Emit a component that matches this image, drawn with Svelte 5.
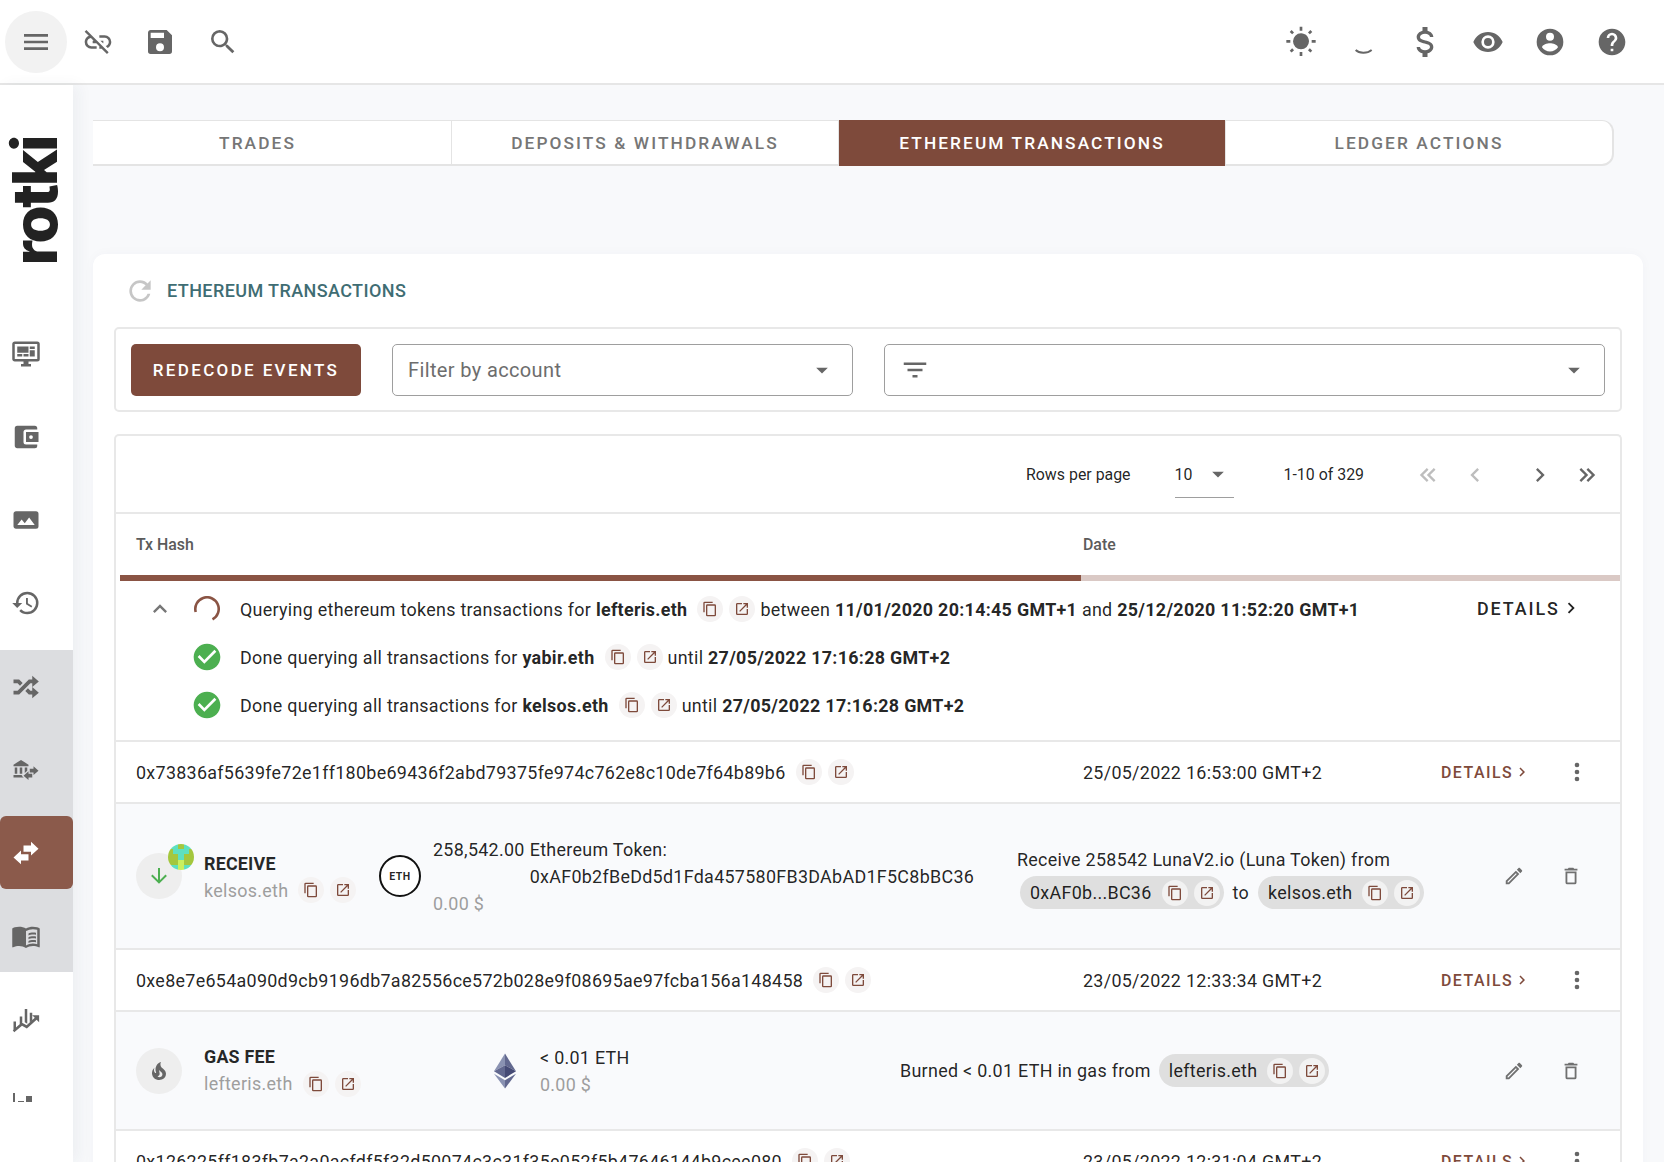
<script>
  const p = {
    menu: 'M3,6H21V8H3V6M3,11H21V13H3V11M3,16H21V18H3V16Z',
    linkoff: 'M17,7H13V8.9H17C18.71,8.9 20.1,10.29 20.1,12C20.1,13.43 19.12,14.63 17.79,15L19.25,16.44C20.88,15.61 22,13.95 22,12A5,5 0 0,0 17,7M16,11H13.81L15.81,13H16V11M2,4.27L5.11,7.38C3.29,8.12 2,9.91 2,12A5,5 0 0,0 7,17H11V15.1H7C5.29,15.1 3.9,13.71 3.9,12C3.9,10.41 5.11,9.1 6.66,8.93L8.73,11H8V13H10.73L13,15.27V17H14.73L18.74,21L20,19.74L3.27,3L2,4.27Z',
    save: 'M15,9H5V5H15M12,19A3,3 0 0,1 9,16A3,3 0 0,1 12,13A3,3 0 0,1 15,16A3,3 0 0,1 12,19M17,3H5C3.89,3 3,3.9 3,5V19A2,2 0 0,0 5,21H19A2,2 0 0,0 21,19V7L17,3Z',
    search: 'M9.5,3A6.5,6.5 0 0,1 16,9.5C16,11.11 15.41,12.59 14.44,13.73L14.71,14H15.5L20.5,19L19,20.5L14,15.5V14.71L13.73,14.44C12.59,15.41 11.11,16 9.5,16A6.5,6.5 0 0,1 3,9.5A6.5,6.5 0 0,1 9.5,3M9.5,5C7,5 5,7 5,9.5C5,12 7,14 9.5,14C12,14 14,12 14,9.5C14,7 12,5 9.5,5Z',
    sun: 'M3.55,18.54L4.96,19.95L6.76,18.16L5.34,16.74M11,22.45C11.32,22.45 13,22.45 13,22.45V19.5H11M12,5.5A6,6 0 0,0 6,11.5A6,6 0 0,0 12,17.5A6,6 0 0,0 18,11.5C18,8.18 15.31,5.5 12,5.5M20,12.5H23V10.5H20M17.24,18.16L19.04,19.95L20.45,18.54L18.66,16.74M20.45,4.46L19.04,3.05L17.24,4.84L18.66,6.26M13,0.55H11V3.5H13M4,10.5H1V12.5H4M6.76,4.84L4.96,3.05L3.55,4.46L5.34,6.26L6.76,4.84Z',
    usd: 'M7,15H9C9,16.08 10.37,17 12,17C13.63,17 15,16.08 15,15C15,13.9 13.96,13.5 11.76,12.97C9.64,12.44 7,11.78 7,9C7,7.21 8.47,5.69 10.5,5.18V3H13.5V5.18C15.53,5.69 17,7.21 17,9H15C15,7.92 13.63,7 12,7C10.37,7 9,7.92 9,9C9,10.1 10.04,10.5 12.24,11.03C14.36,11.56 17,12.22 17,15C17,16.79 15.53,18.31 13.5,18.82V21H10.5V18.82C8.47,18.31 7,16.79 7,15Z',
    eye: 'M12,9A3,3 0 0,0 9,12A3,3 0 0,0 12,15A3,3 0 0,0 15,12A3,3 0 0,0 12,9M12,17A5,5 0 0,1 7,12A5,5 0 0,1 12,7A5,5 0 0,1 17,12A5,5 0 0,1 12,17M12,4.5C7,4.5 2.73,7.61 1,12C2.73,16.39 7,19.5 12,19.5C17,19.5 21.27,16.39 23,12C21.27,7.61 17,4.5 12,4.5Z',
    account: 'M12,19.2C9.5,19.2 7.29,17.92 6,16C6.03,14 10,12.9 12,12.9C14,12.9 17.97,14 18,16C16.71,17.92 14.5,19.2 12,19.2M12,5A3,3 0 0,1 15,8A3,3 0 0,1 12,11A3,3 0 0,1 9,8A3,3 0 0,1 12,5M12,2A10,10 0 0,0 2,12A10,10 0 0,0 12,22A10,10 0 0,0 22,12A10,10 0 0,0 12,2Z',
    help: 'M15.07,11.25L14.17,12.17C13.45,12.89 13,13.5 13,15H11V14.5C11,13.39 11.45,12.39 12.17,11.67L13.41,10.41C13.78,10.05 14,9.55 14,9C14,7.89 13.1,7 12,7A2,2 0 0,0 10,9H8A4,4 0 0,1 12,5A4,4 0 0,1 16,9C16,9.88 15.64,10.67 15.07,11.25M13,19H11V17H13M12,2A10,10 0 0,0 2,12C2,17.53 6.47,22 12,22C17.53,22 22,17.53 22,12C22,6.47 17.53,2 12,2Z',
    refresh: 'M17.65,6.35C16.2,4.9 14.21,4 12,4A8,8 0 0,0 4,12A8,8 0 0,0 12,20C15.73,20 18.84,17.45 19.73,14H17.65C16.83,16.33 14.61,18 12,18A6,6 0 0,1 6,12A6,6 0 0,1 12,6C13.66,6 15.14,6.69 16.22,7.78L13,11H20V4L17.65,6.35Z',
    filter: 'M6,13H18V11H6M3,6V8H21V6M10,18H14V16H10V18Z',
    down: 'M7,10L12,15L17,10H7Z',
    left: 'M15.41,16.58L10.83,12L15.41,7.41L14,6L8,12L14,18L15.41,16.58Z',
    right: 'M8.59,16.58L13.17,12L8.59,7.41L10,6L16,12L10,18L8.59,16.58Z',
    dleft: 'M18.41,7.41L17,6L11,12L17,18L18.41,16.59L13.83,12L18.41,7.41M12.41,7.41L11,6L5,12L11,18L12.41,16.59L7.83,12L12.41,7.41Z',
    dright: 'M5.59,7.41L7,6L13,12L7,18L5.59,16.59L10.17,12L5.59,7.41M11.59,7.41L13,6L19,12L13,18L11.59,16.59L16.17,12L11.59,7.41Z',
    up: 'M7.41,15.41L12,10.83L16.59,15.41L18,14L12,8L6,14L7.41,15.41Z',
    check: 'M12 2C6.5 2 2 6.5 2 12S6.5 22 12 22 22 17.5 22 12 17.5 2 12 2M10 17L5 12L6.41 10.59L10 14.17L17.59 6.58L19 8L10 17Z',
    copy: 'M19,21H8V7H19M19,5H8A2,2 0 0,0 6,7V21A2,2 0 0,0 8,23H19A2,2 0 0,0 21,21V7A2,2 0 0,0 19,5M16,1H4A2,2 0 0,0 2,3V17H4V3H16V1Z',
    open: 'M14,3V5H17.59L7.76,14.83L9.17,16.24L19,6.41V10H21V3M19,19H5V5H12V3H5C3.89,3 3,3.9 3,5V19A2,2 0 0,0 5,21H19A2,2 0 0,0 21,19V12H19V19Z',
    arrow: 'M11,4H13V16L18.5,10.5L19.92,11.92L12,19.84L4.08,11.92L5.5,10.5L11,16V4Z',
    fire: 'M17.66 11.2C17.43 10.9 17.15 10.64 16.89 10.38C16.22 9.78 15.46 9.35 14.82 8.72C13.33 7.26 13 4.85 13.95 3C13 3.23 12.17 3.75 11.46 4.32C8.87 6.4 7.85 10.07 9.07 13.22C9.11 13.32 9.15 13.42 9.15 13.55C9.15 13.77 9 13.97 8.8 14.05C8.57 14.15 8.33 14.09 8.14 13.93C8.08 13.88 8.04 13.83 8 13.76C6.87 12.33 6.69 10.28 7.45 8.64C5.78 10 4.87 12.3 5 14.47C5.06 14.97 5.12 15.47 5.29 15.97C5.43 16.57 5.7 17.17 6 17.7C7.08 19.43 8.95 20.67 10.96 20.92C13.1 21.19 15.39 20.8 17.03 19.32C18.86 17.66 19.5 15 18.56 12.72L18.43 12.46C18.28 12.13 17.66 11.2 17.66 11.2M14.5 17.5C14.22 17.74 13.76 18 13.4 18.1C12.28 18.5 11.16 17.94 10.5 17.28C11.69 17 12.4 16.12 12.61 15.23C12.78 14.43 12.46 13.77 12.33 13C12.21 12.26 12.23 11.63 12.5 10.94C12.69 11.32 12.89 11.7 13.13 12C13.9 13 15.11 13.44 15.37 14.8C15.41 14.94 15.43 15.08 15.43 15.23C15.46 16.05 15.1 16.95 14.5 17.5H14.5Z',
    pencil: 'M14.06,9L15,9.94L5.92,19H5V18.08L14.06,9M17.66,3C17.41,3 17.15,3.1 16.96,3.29L15.13,5.12L18.88,8.87L20.71,7.04C21.1,6.65 21.1,6 20.71,5.63L18.37,3.29C18.17,3.09 17.92,3 17.66,3M14.06,6.19L3,17.25V21H6.75L17.81,9.94L14.06,6.19Z',
    trash: 'M6,19A2,2 0 0,0 8,21H16A2,2 0 0,0 18,19V7H6V19M8,9H16V19H8V9M15.5,4L14.5,3H9.5L8.5,4H5V6H19V4H15.5Z',
    dots: 'M12,16A2,2 0 0,1 14,18A2,2 0 0,1 12,20A2,2 0 0,1 10,18A2,2 0 0,1 12,16M12,10A2,2 0 0,1 14,12A2,2 0 0,1 12,14A2,2 0 0,1 10,12A2,2 0 0,1 12,10M12,4A2,2 0 0,1 14,6A2,2 0 0,1 12,8A2,2 0 0,1 10,6A2,2 0 0,1 12,4Z',
    dash: 'M21,16V4H3V16H21M21,2A2,2 0 0,1 23,4V16A2,2 0 0,1 21,18H14V20H16V22H8V20H10V18H3C1.89,18 1,17.1 1,16V4C1,2.89 1.89,2 3,2H21M5,6H14V11H5V6M15,6H19V8H15V6M19,9V14H15V9H19M5,12H9V14H5V12M10,12H14V14H10V12Z',
    wallet: 'M21,18V19A2,2 0 0,1 19,21H5C3.89,21 3,20.1 3,19V5A2,2 0 0,1 5,3H19A2,2 0 0,1 21,5V6H12C10.89,6 10,6.9 10,8V16A2,2 0 0,0 12,18M12,16H22V8H12M16,13.5A1.5,1.5 0 0,1 14.5,12A1.5,1.5 0 0,1 16,10.5A1.5,1.5 0 0,1 17.5,12A1.5,1.5 0 0,1 16,13.5Z',
    image: 'M20,5A2,2 0 0,1 22,7V17A2,2 0 0,1 20,19H4C2.89,19 2,18.1 2,17V7C2,5.89 2.89,5 4,5H20M5,16H19L14.5,10L11,14.5L8.5,11.5L5,16Z',
    history: 'M13.5,8H12V13L16.28,15.54L17,14.33L13.5,12.25V8M13,3A9,9 0 0,0 4,12H1L4.96,16.03L9,12H6A7,7 0 0,1 13,5A7,7 0 0,1 20,12A7,7 0 0,1 13,19C11.07,19 9.32,18.21 8.06,16.94L6.64,18.36C8.27,20 10.5,21 13,21A9,9 0 0,0 22,12A9,9 0 0,0 13,3',
    shuffle: 'M17,3L22.25,7.5L17,12L22.25,16.5L17,21V18H14.26L11.44,15.18L13.56,13.06L15.5,15H17V12L17,9H15.5L6.5,18H2V15H5.26L14.26,6H17V3M2,6H6.5L9.32,8.82L7.2,10.94L5.26,9H2V6Z',
    bank: 'M15,14V11H18V9L22,12.5L18,16V14H15M14,7.7V9H2V7.7L8,4L14,7.7M7,10H9V15H7V10M3,10H5V15H3V10M13,10V12.5L11,14.3V10H13M9.1,16L8.5,16.5L10.2,18H2V16H9.1M17,15V18H14V20L10,16.5L14,13V15H17Z',
    swap: 'M8,10V13H14V18H8V21L2,15.5L8,10M22,8.5L16,3V6H10V11H16V14L22,8.5Z',
    book: 'M12,21.5C10.65,20.65 8.2,20 6.5,20C4.85,20 3.15,20.3 1.75,21.05C1.65,21.1 1.6,21.1 1.5,21.1C1.25,21.1 1,20.85 1,20.6V6C1.6,5.55 2.25,5.25 3,5C4.11,4.65 5.33,4.5 6.5,4.5C8.45,4.5 10.55,4.9 12,6C13.45,4.9 15.55,4.5 17.5,4.5C18.67,4.5 19.89,4.65 21,5C21.75,5.25 22.4,5.55 23,6V20.6C23,20.85 22.75,21.1 22.5,21.1C22.4,21.1 22.35,21.1 22.25,21.05C20.85,20.3 19.15,20 17.5,20C15.8,20 13.35,20.65 12,21.5M12,8V19.5C13.35,18.65 15.8,18 17.5,18C18.7,18 19.9,18.15 21,18.5V7C19.9,6.65 18.7,6.5 17.5,6.5C15.8,6.5 13.35,7.15 12,8M14,10C15.2,9.3 17.6,9 20,9.4V10.9C17.6,10.5 15.2,10.8 14,11.5V10M14,13C15.2,12.3 17.6,12 20,12.4V13.9C17.6,13.5 15.2,13.8 14,14.5V13M14,16C15.2,15.3 17.6,15 20,15.4V16.9C17.6,16.5 15.2,16.8 14,17.5V16Z',
    finance: 'M2,21L2,14H4V18.8L2,21M7,17V10H9V15L7,17M11,14.6V4H13V15.7L11,14.6M15,14.5V7H17V12.7L15,14.5M2.6,22.6L1.4,21L8.5,14.7L12.5,16.9L19,11L17,9H22.5V14.5L20.5,12.5L12.7,19.5L8.8,17.3L2.6,22.6Z'
  };
  const t = '5ee0c0', o = 'a4c73e', y = 'c8f060';
  const blockie = [
    t, t, o, t, t,
    o, t, t, t, o,
    o, o, t, o, o,
    o, o, y, o, o,
    t, t, y, t, t
  ];
</script>

{#snippet icon(d, cls = '')}
  <svg viewBox="0 0 24 24" class={cls} aria-hidden="true"><path {d} /></svg>
{/snippet}

{#snippet acts()}
  <span class="acts">
    <span class="ab">{@render icon(p.copy)}</span>
    <span class="ab">{@render icon(p.open)}</span>
  </span>
{/snippet}

{#snippet txrow(hash, date)}
  <div class="tx">
    <div class="hash"><span>{hash}</span>{@render acts()}</div>
    <div class="date">{date}</div>
    <div class="txdetails">DETAILS {@render icon(p.right)}</div>
    <div class="dots">{@render icon(p.dots)}</div>
  </div>
{/snippet}

<div class="app">
  <header class="topbar">
    <div class="tgroup">
      <span class="tb round">{@render icon(p.menu)}</span>
      <span class="tb">{@render icon(p.linkoff)}</span>
      <span class="tb">{@render icon(p.save)}</span>
      <span class="tb">{@render icon(p.search)}</span>
    </div>
    <div class="tgroup right">
      <span class="tb">{@render icon(p.sun)}</span>
      <span class="tb">
        <svg viewBox="0 0 24 24" aria-hidden="true"><path class="moon" d="M6.5 18 C9 20.6 15 21 18.5 18" /></svg>
      </span>
      <span class="tb">{@render icon(p.usd, 'big')}</span>
      <span class="tb">{@render icon(p.eye)}</span>
      <span class="tb">{@render icon(p.account)}</span>
      <span class="tb">{@render icon(p.help)}</span>
    </div>
  </header>

  <div class="layout">
    <aside class="side">
      <div class="logo"><span>rotki</span></div>
      <div class="nav">{@render icon(p.dash)}</div>
      <div class="nav">{@render icon(p.wallet)}</div>
      <div class="nav">{@render icon(p.image)}</div>
      <div class="nav">{@render icon(p.history)}</div>
      <div class="navgroup">
        <div class="nav">{@render icon(p.shuffle)}</div>
        <div class="nav">{@render icon(p.bank)}</div>
        <div class="nav active">{@render icon(p.swap)}</div>
        <div class="nav">{@render icon(p.book)}</div>
      </div>
      <div class="nav">{@render icon(p.finance)}</div>
      <div class="nav clipbars"><i class="b1"></i><i class="b2"></i><i class="b3"></i></div>
    </aside>

    <main class="main">
      <nav class="tabs">
        <div class="tab first">TRADES</div>
        <div class="tab">DEPOSITS &amp; WITHDRAWALS</div>
        <div class="tab on">ETHEREUM TRANSACTIONS</div>
        <div class="tab">LEDGER ACTIONS</div>
      </nav>

      <section class="card">
        <div class="title">
          {@render icon(p.refresh)}
          <span>ETHEREUM TRANSACTIONS</span>
        </div>

        <div class="filters">
          <div class="btn">REDECODE EVENTS</div>
          <div class="field acc"><span>Filter by account</span>{@render icon(p.down)}</div>
          <div class="field flt">{@render icon(p.filter, 'ficon')}{@render icon(p.down)}</div>
        </div>

        <div class="table">
          <div class="pager">
            <span>Rows per page</span>
            <span class="rows"><span>10</span>{@render icon(p.down)}</span>
            <span class="range">1-10 of 329</span>
            <span class="pg">
              {@render icon(p.dleft, 'off')}
              {@render icon(p.left, 'off gapr')}
              {@render icon(p.right)}
              {@render icon(p.dright)}
            </span>
          </div>

          <div class="thead">
            <div class="th1">Tx Hash</div>
            <div>Date</div>
          </div>
          <div class="progress"><div class="bar"></div></div>

          <div class="queries">
            <div class="q">
              <span class="caret">{@render icon(p.up)}</span>
              <svg class="spin" viewBox="0 0 26 26" aria-hidden="true"><path d="M1.7 16 A11.7 11.7 0 1 1 18.5 23.3" /></svg>
              <span class="qt">Querying ethereum tokens transactions for <b>lefteris.eth</b></span>
              {@render acts()}
              <span class="qt">between <b>11/01/2020 20:14:45 GMT+1</b> and <b>25/12/2020 11:52:20 GMT+1</b></span>
              <span class="qdetails">DETAILS {@render icon(p.right)}</span>
            </div>
            <div class="q">
              <span class="caret"></span>
              {@render icon(p.check, 'ok')}
              <span class="qt">Done querying all transactions for <b>yabir.eth</b></span>
              {@render acts()}
              <span class="qt">until <b>27/05/2022 17:16:28 GMT+2</b></span>
            </div>
            <div class="q">
              <span class="caret"></span>
              {@render icon(p.check, 'ok')}
              <span class="qt">Done querying all transactions for <b>kelsos.eth</b></span>
              {@render acts()}
              <span class="qt">until <b>27/05/2022 17:16:28 GMT+2</b></span>
            </div>
          </div>

          {@render txrow('0x73836af5639fe72e1ff180be69436f2abd79375fe974c762e8c10de7f64b89b6', '25/05/2022 16:53:00 GMT+2')}

          <div class="ev receive">
            <div class="evicon">
              {@render icon(p.arrow, 'green')}
              <span class="blockie">
                {#each blockie as c}<i style="background:#{c}"></i>{/each}
              </span>
            </div>
            <div class="evtype">
              <b>RECEIVE</b>
              <div class="who">kelsos.eth{@render acts()}</div>
            </div>
            <div class="asset">
              <div class="ethc">ETH</div>
              <div class="amt">
                <div class="a1"><span>258,542.00</span><span class="tok">Ethereum Token:<br />0xAF0b2fBeDd5d1Fda457580FB3DAbAD1F5C8bBC36</span></div>
                <div class="usd">0.00 $</div>
              </div>
            </div>
            <div class="notes">
              <div>Receive 258542 LunaV2.io (Luna Token) from</div>
              <div class="chips">
                <span class="chip">0xAF0b...BC36{@render acts()}</span>
                <span>to</span>
                <span class="chip">kelsos.eth{@render acts()}</span>
              </div>
            </div>
            <div class="evacts">{@render icon(p.pencil)}{@render icon(p.trash)}</div>
          </div>

          {@render txrow('0xe8e7e654a090d9cb9196db7a82556ce572b028e9f08695ae97fcba156a148458', '23/05/2022 12:33:34 GMT+2')}

          <div class="ev gas">
            <div class="evicon">{@render icon(p.fire, 'flame')}</div>
            <div class="evtype">
              <b>GAS FEE</b>
              <div class="who">lefteris.eth{@render acts()}</div>
            </div>
            <div class="asset">
              <svg class="ethlogo" viewBox="0 0 24 38" aria-hidden="true">
                <path fill="#8a92b2" d="M12 0 L0 19.4 L12 12.6Z" />
                <path fill="#62688f" d="M12 0 L24 19.4 L12 12.6Z" />
                <path fill="#62688f" d="M0 19.4 L12 12.6 L12 26.5Z" />
                <path fill="#454a75" d="M24 19.4 L12 12.6 L12 26.5Z" />
                <path fill="#8a92b2" d="M0 22 L12 38 L12 29Z" />
                <path fill="#62688f" d="M24 22 L12 38 L12 29Z" />
              </svg>
              <div class="amt2">
                <div>&lt; 0.01 ETH</div>
                <div class="usd">0.00 $</div>
              </div>
            </div>
            <div class="notes line">
              <span>Burned &lt; 0.01 ETH in gas from</span>
              <span class="chip">lefteris.eth{@render acts()}</span>
            </div>
            <div class="evacts">{@render icon(p.pencil)}{@render icon(p.trash)}</div>
          </div>

          {@render txrow('0x126225ff183fb7a2a0acfdf5f32d50074c3c31f35e052f5b47646144b9cee080', '23/05/2022 12:31:04 GMT+2')}
        </div>
      </section>
    </main>
  </div>
</div>

<style>
  :global(body) { margin: 0; background: #f8f9fb; }
  .app {
    width: 1664px; height: 1162px; overflow: hidden;
    font-family: Roboto, "Liberation Sans", sans-serif;
    color: rgba(0,0,0,.87);
    font-size: 16px;
    background: #f8f9fb;
  }
  svg { display: block; width: 24px; height: 24px; fill: currentColor; flex: none; }

  .topbar {
    height: 83px; box-sizing: content-box;
    background: #fff; border-bottom: 2px solid #e6e6e6;
    display: flex; justify-content: space-between; align-items: center;
    padding: 0 21px 0 5px; color: #666;
  }
  .tgroup { display: flex; align-items: center; }
  .tb { width: 62.2px; height: 62px; display: flex; align-items: center; justify-content: center; }
  .tb svg { width: 32px; height: 32px; }
  .tb svg.big { width: 40px; height: 40px; }
  .round { background: #f2f2f2; border-radius: 50%; }
  .moon { fill: none; stroke: #666; stroke-width: 1.4; }

  .layout { display: flex; height: 1077px; }
  .side { width: 73px; background: #fff; flex: none; overflow: hidden; box-shadow: 6px 0 14px rgba(30,50,80,.05); }
  .logo { height: 232px; display: flex; justify-content: center; align-items: flex-start; }
  .logo span {
    writing-mode: vertical-rl; transform: translateX(-2px) rotate(180deg);
    font-family: Inter, sans-serif; font-weight: 800; font-size: 62px; line-height: 60px;
    letter-spacing: -2.5px; color: #222; margin-top: 52px;
  }
  .nav { height: 73px; margin-bottom: 10px; display: flex; align-items: center; padding-left: 11px; box-sizing: border-box; color: #666; }
  .nav svg { width: 30px; height: 30px; }
  .navgroup { background: #dcdde0; margin: 11px 0 10px; }
  .navgroup .nav:last-child { margin-bottom: 0; }
  .active { background: #8b5a4b; color: #fff; border-radius: 6px; }
  .clipbars { position: relative; }
  .clipbars i { position: absolute; background: #666; bottom: 36px; display: block; }
  .clipbars .b1 { left: 13px; width: 2px; height: 9px; }
  .clipbars .b2 { left: 18px; width: 6px; height: 1px; }
  .clipbars .b3 { left: 26px; width: 6px; height: 6px; }

  .main { flex: 1; padding: 35px 21px 0 20px; min-width: 0; }
  .tabs {
    width: 1521px; height: 46px; box-sizing: border-box; display: grid;
    grid-template-columns: 359px 387px 387px 1fr;
    background: #fff; border: solid #e4e4e4; border-width: 1px 2px 2px 0;
    border-radius: 0 12px 12px 0;
  }
  .tab {
    display: flex; align-items: center; justify-content: center;
    font-weight: 500; letter-spacing: 2.1px; color: #767676; font-size: 17.3px;
    border-right: 1px solid #e4e4e4;
  }
  .tab.first { padding-right: 29px; }
  .tab:last-child { border-right: 0; }
  .tab.on { background: #7e4a3b; color: #fff; margin: -1px 0 -2px; }

  .card {
    margin-top: 88px; background: #fff; border-radius: 12px;
    padding: 20px 21px 0; box-sizing: border-box; width: 1550px;
    box-shadow: 0 0 12px rgba(30,50,80,.03);
  }
  .title { display: flex; align-items: center; height: 33px; color: #3f6d73; font-weight: 500; font-size: 18px; letter-spacing: .41px; gap: 11px; padding-left: 10px; }
  .title svg { width: 32px; height: 32px; color: #c6c6c6; }
  .filters {
    margin-top: 20px; height: 85px; box-sizing: border-box;
    border: 2px solid #e8e8e8; border-radius: 5px;
    display: flex; align-items: center; padding: 0 15px;
  }
  .btn {
    width: 230px; height: 52px; background: #7e4a3b; color: #fff; border-radius: 5px;
    display: flex; align-items: center; justify-content: center;
    font-weight: 500; letter-spacing: 2.35px; font-size: 17px;
  }
  .field {
    height: 52px; box-sizing: border-box; border: 1.5px solid #9e9e9e; border-radius: 5px;
    display: flex; align-items: center; justify-content: space-between; color: #6d6d6d;
    font-size: 20px; letter-spacing: .37px; background: #fff;
  }
  .field > svg:last-child { width: 28px; height: 28px; color: #666; }
  .acc { width: 461px; margin-left: 31px; padding: 0 16px 0 15px; }
  .flt { width: 721px; margin-left: 31px; padding: 0 16px 0 15px; }
  .ficon { width: 30px; height: 30px; color: #666; }

  .table {
    margin-top: 22px; border: 2px solid #e8e8e8; border-bottom: 0; border-radius: 5px 5px 0 0;
  }
  .pager {
    height: 78px; display: flex; align-items: center; justify-content: flex-end;
    font-size: 15.9px; border-bottom: 2px solid #e8e8e8; padding: 1px 19px 0 0; box-sizing: border-box;
  }
  .rows {
    margin-left: 44px; width: 59px; height: 46px; box-sizing: border-box; border-bottom: 1.5px solid #9e9e9e;
    display: flex; align-items: center; justify-content: space-between;
  }
  .rows svg { width: 28px; height: 28px; margin-right: 2px; color: #666; }
  .range { margin-left: 50px; }
  .pg { margin-left: 50px; display: flex; gap: 19px; color: #666; }
  .pg svg { width: 28px; height: 28px; }
  .pg svg.off { color: #bdbdbd; }
  .pg svg.gapr { margin-right: 18px; }

  .thead { display: grid; grid-template-columns: 947px 1fr; padding-left: 20px; height: 60px; align-items: center; font-weight: 500; color: #5b5b5b; font-size: 15.9px; }
  .progress { height: 6px; margin-left: 4px; background: #dac9c5; margin-top: 1px; }
  .bar { height: 100%; width: 961px; background: #8a5444; }

  .queries { height: 161px; padding-top: 4px; box-sizing: border-box; border-bottom: 2px solid #e8e8e8; }
  .q { height: 48px; display: flex; align-items: center; font-size: 17.9px; letter-spacing: .3px; position: relative; }
  .caret { width: 26px; margin-left: 30px; margin-right: 22px; color: #777; }
  .caret svg { width: 28px; height: 28px; }
  svg.spin { width: 26px; height: 26px; fill: none; stroke: #8a5444; stroke-width: 2.6; }
  svg.ok { width: 32px; height: 32px; margin: 0 -3px; color: #4caf50; }
  .qt { margin-left: 20px; white-space: nowrap; }
  .acts + .qt { margin-left: 5px; }
  .q b { font-weight: 700; }
  .qdetails { position: absolute; left: 1361px; top: 12px; font-weight: 500; letter-spacing: 1.9px; display: flex; align-items: center; gap: 0; }
  .qdetails svg { width: 22px; height: 22px; }

  .acts { display: inline-flex; gap: 6px; margin-left: 10px; align-items: center; flex: none; letter-spacing: 0; }
  .ab { width: 26px; height: 26px; border-radius: 50%; background: #f5f3f3; display: flex; align-items: center; justify-content: center; color: #7e4a3b; }
  .ab svg { width: 16px; height: 16px; }

  .tx {
    display: grid; grid-template-columns: 947px 358px 128px 1fr; height: 62px; padding-left: 20px;
    align-items: center; border-bottom: 2px solid #e8e8e8; font-size: 17.9px; letter-spacing: .3px; box-sizing: border-box; background: #fff;
  }
  .hash { display: flex; align-items: center; white-space: nowrap; }
  .txdetails { color: #7e4a3b; font-weight: 500; font-size: 15.9px; letter-spacing: 1.5px; display: flex; align-items: center; }
  .txdetails svg { width: 18px; height: 18px; }
  .dots { color: #666; }
  .dots svg { width: 28px; height: 28px; margin-left: -6px; }

  .ev { background: #f9fafc; border-bottom: 2px solid #e8e8e8; display: flex; align-items: center; box-sizing: border-box; font-size: 17.9px; letter-spacing: .3px; padding-left: 20px; position: relative; }
  .receive { height: 146px; }
  .gas { height: 119px; }
  .evicon { width: 46px; height: 46px; border-radius: 50%; background: #eeeeee; display: flex; align-items: center; justify-content: center; position: relative; flex: none; }
  svg.green { color: #4caf50; }
  svg.flame { color: #666; }
  .blockie { position: absolute; left: 32px; top: -9px; width: 26px; height: 26px; border-radius: 50%; overflow: hidden; display: grid; grid-template-columns: repeat(5, 1fr); grid-auto-rows: 1fr; }
  .blockie i { display: block; }
  .evtype { margin-left: 22px; width: 175px; flex: none; }
  .receive .evtype { padding-top: 4px; }
  .gas .evtype { padding-top: 2px; }
  .evtype b { color: rgba(0,0,0,.85); font-weight: 700; letter-spacing: .2px; }
  .who { color: #9e9e9e; display: flex; align-items: center; margin-top: 3px; height: 27px; white-space: nowrap; }
  .asset { display: flex; align-items: center; flex: none; }
  .receive .asset { width: 638px; }
  .ethc { width: 42px; height: 42px; box-sizing: border-box; border: 2px solid #111; border-radius: 50%; background: #fff; display: flex; align-items: center; justify-content: center; font-size: 10.5px; font-weight: 700; letter-spacing: .6px; flex: none; }
  .amt { margin-left: 12px; line-height: 27px; }
  .a1 { display: flex; gap: 5px; white-space: nowrap; }
  .tok { display: block; }
  .usd { color: #9e9e9e; }
  .notes { flex: none; position: relative; top: 3px; }
  .chips { display: flex; align-items: center; gap: 9px; margin-top: 6px; margin-left: 3px; }
  .chip { height: 33px; border-radius: 17px; background: #dfdfdf; padding: 0 4px 0 10px; display: inline-flex; align-items: center; white-space: nowrap; }
  .chip .ab { background: #f2f2f2; }
  .chip .acts { margin-left: 10px; }
  .notes.line { display: flex; align-items: center; gap: 8px; top: 0; }
  .gas .evtype { width: 280px; }
  .gas .asset { width: 416px; }
  .ethlogo { width: 22px; height: 36px; margin-left: 10px; }
  .amt2 { margin-left: 24px; line-height: 27px; }
  .evacts { position: absolute; left: 1387px; top: 50%; transform: translateY(-50%); display: flex; gap: 35px; color: #707070; }
  .evacts svg { width: 22px; height: 22px; }
</style>
